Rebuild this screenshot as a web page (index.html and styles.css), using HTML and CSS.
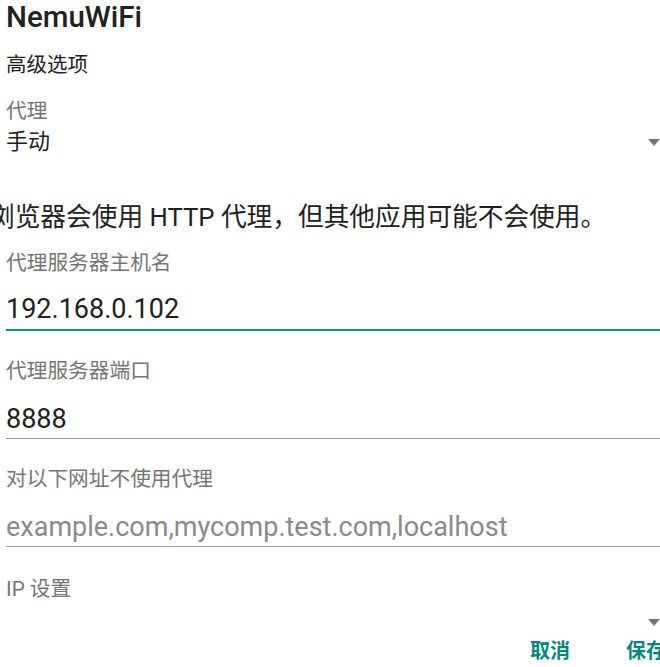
FILE: index.html
```html
<!DOCTYPE html>
<html lang="zh-CN">
<head>
<meta charset="utf-8">
<link rel="stylesheet" href="styles.css">
</head>
<body>
<div class="dialog">
  <h1 class="title">NemuWiFi</h1>
  <div class="section">高级选项</div>

  <div class="label lbl-proxy">代理</div>
  <div class="spinner">
    <span class="spinner-value">手动</span>
    <span class="arrow"></span>
  </div>

  <p class="help">浏览器会使用 HTTP 代理，但其他应用可能不会使用。</p>

  <div class="field">
    <div class="label">代理服务器主机名</div>
    <div class="input focused">192.168.0.102</div>
  </div>

  <div class="field">
    <div class="label">代理服务器端口</div>
    <div class="input">8888</div>
  </div>

  <div class="field">
    <div class="label">对以下网址不使用代理</div>
    <div class="input placeholder">example.com,mycomp.test.com,localhost</div>
  </div>

  <div class="label lbl-ip">IP 设置</div>
  <div class="spinner spinner-empty">
    <span class="spinner-value"></span>
    <span class="arrow"></span>
  </div>

  <div class="actions">
    <span class="btn">取消</span>
    <span class="btn">保存</span>
  </div>
</div>
</body>
</html>
```

FILE: styles.css
```css
html, body {
  margin: 0;
  padding: 0;
  background: #ffffff;
  overflow: hidden;
}

body {
  width: 660px;
  height: 667px;
  font-family: Roboto, "Noto Sans CJK SC", sans-serif;
  color: #212121;
}

.dialog {
  width: 700px;
  padding-left: 6px;
  box-sizing: border-box;
}

.title {
  margin: 0;
  font-size: 29.5px;
  line-height: 34px;
  font-weight: 500;
  color: #212121;
}

.section {
  margin-top: 18px;
  font-size: 20.5px;
  line-height: 26px;
}

.label {
  font-size: 20.7px;
  line-height: 24px;
  color: #757575;
}

.lbl-proxy {
  margin-top: 21px;
}

.spinner {
  width: 654px;
  height: 26px;
  margin-top: 6px;
  display: flex;
  align-items: center;
  justify-content: space-between;
}

.spinner-value {
  font-size: 22px;
  line-height: 26px;
}

.arrow {
  width: 0;
  height: 0;
  border-left: 6.5px solid transparent;
  border-right: 6.5px solid transparent;
  border-top: 7px solid #757575;
}

.help {
  margin: 48px 0 0 -17px;
  font-size: 25.7px;
  line-height: 28px;
  white-space: nowrap;
}

.field {
  margin-top: 20px;
}

.field + .field {
  margin-top: 28px;
}

.input {
  margin-top: 0;
  padding: 20px 0 3px;
  font-size: 27px;
  line-height: 32px;
  border-bottom: 1px solid #9e9e9e;
  white-space: nowrap;
}

.input.focused {
  padding-top: 18px;
  padding-bottom: 4px;
  border-bottom: 2px solid #009688;
}

.input.placeholder {
  color: #8a8a8a;
}

.lbl-ip {
  margin-top: 30px;
}

.spinner-empty {
  margin-top: 8px;
}

.actions {
  display: flex;
  gap: 56px;
  padding-left: 524px;
  margin-top: 3px;
}

.btn {
  font-size: 20px;
  line-height: 26px;
  font-weight: 700;
  color: #00897b;
}
```
